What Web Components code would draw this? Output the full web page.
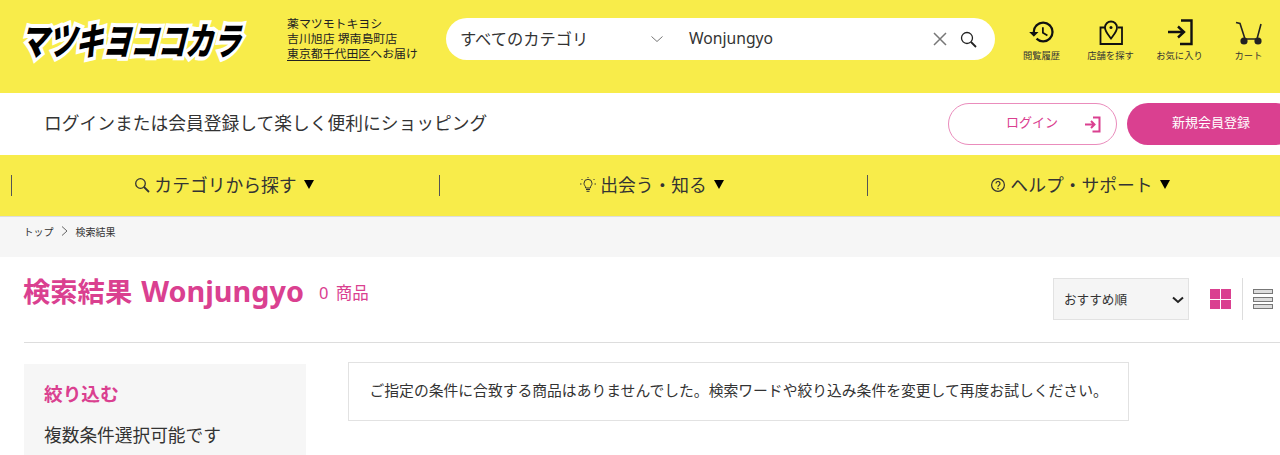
<!DOCTYPE html>
<html lang="ja">
<head>
<meta charset="utf-8">
<title>検索結果</title>
<style>
	html, body { margin: 0; height: 455px; overflow: hidden; background: #fff; }
	body { font-family: "Noto Sans", "Noto Sans CJK JP", sans-serif; color: #333; }
</style>
</head>
<body>

<site-header>
	<store-info slot="store"></store-info>
	<search-box slot="search"></search-box>
	<icon-link slot="icons" label="閲覧履歴">
		<svg width="28" height="28" viewBox="0 0 24 24" fill="#111"><path d="M13 3a9 9 0 0 0-9 9H1l3.89 3.89.07.14L9 12H6c0-3.87 3.13-7 7-7s7 3.13 7 7-3.13 7-7 7c-1.93 0-3.68-.79-4.94-2.06l-1.42 1.42A8.954 8.954 0 0 0 13 21a9 9 0 0 0 0-18zm-1 5v5l4.28 2.54.72-1.21-3.5-2.08V8H12z"/></svg>
	</icon-link>
	<icon-link slot="icons" label="店舗を探す">
		<svg width="28" height="28" viewBox="0 0 28 28" fill="none" stroke="#111" stroke-width="1.8"><path d="M8 9.500H3.500V26H25V9.500h-4"/><path d="M14 20.500c-3-4-6-7-6-11a6 6 0 0 1 12 0c0 4-3 7-6 11z"/><circle cx="14" cy="9.500" r="1.500" fill="#111" stroke="none"/></svg>
	</icon-link>
	<icon-link slot="icons" label="お気に入り">
		<svg width="28" height="28" viewBox="0 0 28 28" fill="none" stroke="#111" stroke-width="2.400"><path d="M15 2.500h10.500v23.500H14"/><path d="M2 14h16M12 8.500l6 5.500-6 5.500"/></svg>
	</icon-link>
	<icon-link slot="icons" label="カート">
		<svg width="28" height="28" viewBox="0 0 28 28" fill="none" stroke="#222" stroke-width="1.600"><path d="M1 4.500l4 1 5 15.500h12l4-15"/><circle cx="9" cy="23" r="3.600" fill="#222" stroke="none"/><circle cx="23" cy="23" r="3.600" fill="#222" stroke="none"/></svg>
	</icon-link>
</site-header>

<login-bar></login-bar>

<main-nav>
	<nav-item label="カテゴリから探す">
		<svg width="16" height="16" viewBox="0 0 16 16" fill="none" stroke="#333" stroke-width="1.300"><circle cx="6.500" cy="6.500" r="4.800"/><path d="M10 10l5 5" stroke-width="1.800"/></svg>
	</nav-item>
	<nav-item label="出会う・知る">
		<svg width="16" height="16" viewBox="0 0 16 16" fill="none" stroke="#333" stroke-width="1"><path d="M5.700 11c0-2-1.700-2.500-1.700-4.700a4 4 0 0 1 8 0C12 8.500 10.300 9 10.300 11z"/><path d="M6 12.500h4M6.500 14.300h3"/><path d="M8 0v1M1.500 2l1 1M14.500 2l-1 1M0 7h1.500M14.500 7H16"/></svg>
	</nav-item>
	<nav-item label="ヘルプ・サポート">
		<svg width="16" height="16" viewBox="0 0 16 16" fill="none" stroke="#333" stroke-width="1.200"><circle cx="8" cy="8" r="6.400"/><path d="M6 6.500a2 2 0 1 1 3 1.700c-.7.400-1 .8-1 1.500"/><circle cx="8" cy="11.600" r=".8" fill="#333" stroke="none"/></svg>
	</nav-item>
</main-nav>

<bread-crumbs>
	<span>トップ</span>
	<span>検索結果</span>
</bread-crumbs>

<result-head query="Wonjungyo" count="0"></result-head>

<result-body>
	<filter-panel slot="side"></filter-panel>
	<notice-box slot="main">ご指定の条件に合致する商品はありませんでした。検索ワードや絞り込み条件を変更して再度お試しください。</notice-box>
</result-body>

<script>
const PINK = '#da4090';
const YELLOW = '#f8ec4a';

window.customElements.define('site-header', class extends HTMLElement {
	constructor(){
		super();
		this.attachShadow({mode: 'open'}).innerHTML = `
			<style>
				:host { display: flex; align-items: flex-start; height: 93px; background: ${YELLOW}; box-sizing: border-box; }
				.logo { width: 219px; margin: 16px 0 0 24px; height: 47px; display: flex; align-items: center; justify-content: center; flex: none;
					font: 900 28px/47px "Noto Sans CJK JP", sans-serif; color: #000; white-space: nowrap;
					-webkit-text-stroke: 6px #fff; paint-order: stroke fill; transform: skewX(-14deg) scaleY(1.35); letter-spacing: -.5px; }
				.store { margin: 16px 0 0 44px; flex: none; width: 159px; }
				.search { margin-top: 18px; flex: none; }
				.icons { display: flex; margin-top: 18px; margin-left: 12px; }
			</style>
			<div class="logo">マツキヨココカラ</div>
			<div class="store"><slot name="store"></slot></div>
			<div class="search"><slot name="search"></slot></div>
			<div class="icons"><slot name="icons"></slot></div>
		`;
	}
});

window.customElements.define('store-info', class extends HTMLElement {
	constructor(){
		super();
		this.attachShadow({mode: 'open'}).innerHTML = `
			<style>
				:host { display: block; font-size: 11.900px; line-height: 15px; color: #222; white-space: nowrap; }
				u { text-underline-offset: 2px; }
			</style>
			<div>薬マツモトキヨシ</div>
			<div>吉川旭店 堺南島町店</div>
			<div><u>東京都千代田区</u>へお届け</div>
		`;
	}
});

window.customElements.define('search-box', class extends HTMLElement {
	constructor(){
		super();
		this.attachShadow({mode: 'open'}).innerHTML = `
			<style>
				:host { display: flex; align-items: center; width: 549px; height: 42px; background: #fff; border-radius: 21px; font-size: 16.250px; color: #333; box-sizing: border-box; padding: 0 0 3px 15px; }
				.cat { width: 189px; flex: none; margin-left: -1px; }
				.chev { width: 14px; flex: none; margin: 3px 25px 0 1px; display: flex; }
				.q { flex: 1; font-size: 15.700px; }
				.x { display: flex; margin: 3px 13px 0 0; }
				.go { display: flex; margin: 3px 18px 0 0; }
			</style>
			<span class="cat">すべてのカテゴリ</span>
			<span class="chev"><svg width="14" height="8" viewBox="0 0 14 8" fill="none" stroke="#777" stroke-width="1"><path d="M1.500 1.500L7 6.500l5.500-5"/></svg></span>
			<span class="q">Wonjungyo</span>
			<span class="x"><svg width="14" height="14" viewBox="0 0 14 14" fill="none" stroke="#777" stroke-width="1.500"><path d="M1 1l12 12M13 1L1 13"/></svg></span>
			<span class="go"><svg width="17" height="17" viewBox="0 0 17 17" fill="none" stroke="#222" stroke-width="1.300"><circle cx="7" cy="7" r="5.500"/><path d="M11 11l5 5" stroke-width="1.800"/></svg></span>
		`;
	}
});

window.customElements.define('icon-link', class extends HTMLElement {
	constructor(){
		super();
		let label = this.getAttribute('label');
		this.attachShadow({mode: 'open'}).innerHTML = `
			<style>
				:host { display: flex; flex-direction: column; align-items: center; width: 69px; }
				.ic { height: 28px; display: flex; }
				span { margin-top: 3px; font-size: 9.300px; line-height: 13px; color: #333; white-space: nowrap; }
			</style>
			<div class="ic"><slot></slot></div>
			<span>${label}</span>
		`;
	}
});

window.customElements.define('login-bar', class extends HTMLElement {
	constructor(){
		super();
		this.attachShadow({mode: 'open'}).innerHTML = `
			<style>
				:host { display: flex; align-items: center; height: 62px; background: #fff; overflow: hidden; font-size: 13px; }
				.lead { flex: 1; margin-left: 44px; padding-bottom: 4px; font-size: 17.750px; color: #333; white-space: nowrap; }
				.login, .join { box-sizing: border-box; height: 42px; display: flex; align-items: center; border-radius: 21px; flex: none; line-height: 36px; }
				.login { width: 169px; border: 1px solid #ea8cbc; color: ${PINK}; padding-left: 57px; }
				.login span, .join span { margin-top: -5px; }
				.login svg { margin-left: 26px; }
				.join { width: 170px; margin-left: 10px; margin-right: -17px; background: ${PINK}; color: #fff; padding-left: 45px; font-size: 13px; }
			</style>
			<div class="lead">ログインまたは会員登録して楽しく便利にショッピング</div>
			<div class="login"><span>ログイン</span><svg width="17" height="17" viewBox="0 0 17 17" fill="none" stroke="${PINK}" stroke-width="2"><path d="M9 1.500h6.500v14H8.500"/><path d="M1 8.500h9M7 5l3.500 3.500L7 12"/></svg></div>
			<div class="join"><span>新規会員登録</span></div>
		`;
	}
});

window.customElements.define('main-nav', class extends HTMLElement {
	constructor(){
		super();
		this.attachShadow({mode: 'open'}).innerHTML = `
			<style>
				:host { display: flex; align-items: center; height: 61px; background: ${YELLOW}; padding-left: 11px; overflow: hidden; box-sizing: border-box; }
			</style>
			<slot></slot>
		`;
	}
});

window.customElements.define('nav-item', class extends HTMLElement {
	constructor(){
		super();
		let label = this.getAttribute('label');
		this.attachShadow({mode: 'open'}).innerHTML = `
			<style>
				:host { display: flex; flex: none; box-sizing: border-box; width: 428px; height: 21px; padding-right: 3px; align-items: center; justify-content: center; gap: 5px; border-left: 1px solid #555; font-size: 17.800px; color: #333; white-space: nowrap; }
				.tri { width: 0; height: 0; margin: -2px 0 0 2px; border-left: 5.500px solid transparent; border-right: 5.500px solid transparent; border-top: 9px solid #000; }
				.ic { display: flex; margin-top: -2px; }
				.lbl { margin: -4px 0 0 -1px; }
			</style>
			<span class="ic"><slot></slot></span>
			<span class="lbl">${label}</span>
			<span class="tri"></span>
		`;
	}
});

window.customElements.define('bread-crumbs', class extends HTMLElement {
	constructor(){
		super();
		this.attachShadow({mode: 'open'}).innerHTML = `
			<style>
				:host { display: flex; align-items: center; height: 41px; box-sizing: border-box; padding: 0 0 12px 23.500px; background: #f6f6f6; border-top: 1px solid #ddd; font-size: 10px; color: #333; }
				.first { display: flex; align-items: center; }
			</style>
			<span class="first"><slot></slot></span>
		`;
		// insert the chevron between the crumbs
		let first = this.firstElementChild;
		first.insertAdjacentHTML('afterend', '<svg width="7" height="10" viewBox="0 0 7 10" fill="none" stroke="#666" style="margin:0 7.500px"><path d="M1 .5l5 4.500-5 4.500"/></svg>');
	}
});

window.customElements.define('result-head', class extends HTMLElement {
	constructor(){
		super();
		let {query, count} = {query: this.getAttribute('query'), count: this.getAttribute('count')};
		this.attachShadow({mode: 'open'}).innerHTML = `
			<style>
				:host { display: flex; align-items: center; height: 85px; margin-left: 23px; box-sizing: border-box; padding-bottom: 1px; }
				h1 { margin: -15px 0 0; font-size: 27.300px; line-height: 40px; color: ${PINK}; font-weight: 700; white-space: nowrap; }
				h1 span { font-size: 28.800px; margin-left: 2px; }
				.count { margin: -15px 0 0 15px; font-size: 16.500px; word-spacing: 3px; color: ${PINK}; flex: 1; }
				.sel { position: relative; display: flex; }
				select { appearance: none; width: 136px; height: 42px; box-sizing: border-box; font: 12.600px "Noto Sans", "Noto Sans CJK JP", sans-serif; color: #333; background: #f5f5f5; border: 1.500px solid #e2e2e2; padding-left: 10px; border-radius: 0; }
				.sel svg { position: absolute; right: 5px; top: 18px; }
				.grid { margin-left: 21px; width: 21px; height: 20px; display: grid; grid-template-columns: 1fr 1fr; grid-template-rows: 1fr 1fr; gap: 1px; }
				.grid i { background: ${PINK}; }
				.div { width: 1px; height: 42px; background: #ddd; margin: 0 10px 0 11px; }
				.list { width: 20px; height: 20px; margin-right: 7px; display: flex; flex-direction: column; justify-content: space-between; }
				.list i { display: block; height: 5px; border: 1px solid #777; box-sizing: border-box; background: #ddd; }
			</style>
			<h1>検索結果 <span>${query}</span></h1>
			<span class="count">${count} 商品</span>
			<div class="sel"><select><option>おすすめ順</option></select><svg width="12" height="8" viewBox="0 0 12 8" fill="none" stroke="#222" stroke-width="2"><path d="M1 1.500l5 4.500 5-4.500"/></svg></div>
			<div class="grid"><i></i><i></i><i></i><i></i></div>
			<div class="div"></div>
			<div class="list"><i></i><i></i><i></i></div>
		`;
	}
});

window.customElements.define('result-body', class extends HTMLElement {
	constructor(){
		super();
		this.attachShadow({mode: 'open'}).innerHTML = `
			<style>
				:host { display: flex; align-items: flex-start; gap: 42px; margin-left: 24px; border-top: 1px solid #ddd; padding-top: 19px; }
			</style>
			<slot name="side"></slot>
			<slot name="main"></slot>
		`;
	}
});

window.customElements.define('filter-panel', class extends HTMLElement {
	constructor(){
		super();
		this.attachShadow({mode: 'open'}).innerHTML = `
			<style>
				:host { display: block; width: 282px; height: 200px; margin-top: 2px; box-sizing: border-box; padding: 18px 20px; background: #f6f6f6; font-size: 17.700px; color: #333; }
				h2 { margin: 0 0 16px; font-size: 18.700px; line-height: 24px; color: ${PINK}; font-weight: 700; }
				p { margin: 0; line-height: 26px; }
			</style>
			<h2>絞り込む</h2>
			<p>複数条件選択可能です</p>
		`;
	}
});

window.customElements.define('notice-box', class extends HTMLElement {
	constructor(){
		super();
		this.attachShadow({mode: 'open'}).innerHTML = `
			<style>
				:host { display: flex; align-items: center; box-sizing: border-box; width: 781px; height: 59px; border: 1.500px solid #e2e2e2; padding: 0 0 5px 20.500px; font-size: 14.800px; color: #333; white-space: nowrap; }
			</style>
			<slot></slot>
		`;
	}
});
</script>
</body>
</html>
